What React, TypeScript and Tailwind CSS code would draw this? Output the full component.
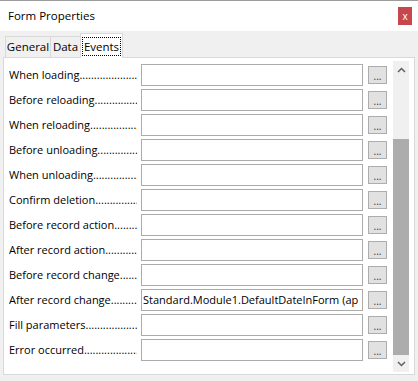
import React from "react"

const events = [
  { label: "When loading", value: "" },
  { label: "Before reloading", value: "" },
  { label: "When reloading", value: "" },
  { label: "Before unloading", value: "" },
  { label: "When unloading", value: "" },
  { label: "Confirm deletion", value: "" },
  { label: "Before record action", value: "" },
  { label: "After record action", value: "" },
  { label: "Before record change", value: "" },
  { label: "After record change", value: "Standard.Module1.DefaultDateInForm (ap" },
  { label: "Fill parameters", value: "" },
  { label: "Error occurred", value: "" },
]

const dots = ".".repeat(80)

function Chevron({ up }: { up?: boolean }) {
  return (
    <svg width="9" height="6" viewBox="0 0 9 6">
      <polyline
        points={up ? "1,5 4.5,1.5 8,5" : "1,1 4.5,4.5 8,1"}
        fill="none"
        stroke="#606060"
        strokeWidth="1.5"
      />
    </svg>
  )
}

export default function App() {
  return (
    <div className="w-[418px] h-[381px] bg-[#f0f0f0] border-t border-[#9c9c9c] flex flex-col font-['Open_Sans',sans-serif] text-[11px] text-black overflow-hidden">
      {/* Title bar */}
      <div className="h-[30px] bg-white flex items-center justify-between pl-2 pr-[6px]">
        <span className="text-[11.5px]">Form Properties</span>
        <div className="w-[14px] h-[18px] bg-[#c7474d] text-white flex items-center justify-center text-[10px] leading-none">
          x
        </div>
      </div>

      {/* Tabs */}
      <div className="h-[26px] flex items-end pl-[5px]">
        <div className="h-[21px] w-[46px] border border-b-0 border-[#d9d9d9] flex items-center justify-center text-[11.5px]">
          General
        </div>
        <div className="h-[21px] w-[31px] -ml-px border border-b-0 border-[#d9d9d9] flex items-center justify-center text-[11.5px]">
          Data
        </div>
        <div className="relative z-10 -mb-px -ml-px h-[25px] w-[43px] bg-white border border-b-0 border-[#d9d9d9] flex items-start justify-center pt-[3px] text-[11.5px]">
          <span className="border border-dotted border-black px-px leading-[17px]">Events</span>
        </div>
      </div>

      {/* Panel */}
      <div className="mx-[3px] h-[318px] bg-white border border-[#d9d9d9] flex">
        <div className="pl-[5px] pt-[6px] flex flex-col gap-[3px]">
          {events.map((e) => (
            <div key={e.label} className="flex items-center h-[22px]">
              <div className="w-[128px] mr-[4px] overflow-hidden whitespace-nowrap">
                {e.label}
                {dots}
              </div>
              <div className="w-[222px] h-[22px] border border-[#ababab] bg-white pl-[1px] overflow-hidden whitespace-nowrap flex items-center">
                {e.value}
              </div>
              <div className="ml-[5px] w-[19px] h-[18px] bg-[#e1e1e1] border border-[#adadad] flex items-end justify-center pb-[2px] text-[10px] leading-none text-[#333]">
                ...
              </div>
            </div>
          ))}
        </div>

        {/* Scrollbar */}
        <div className="ml-[6px] mt-[3px] w-[16px] h-[311px] bg-[#f0f0f0] flex flex-col">
          <div className="h-[17px] flex items-center justify-center">
            <Chevron up />
          </div>
          <div className="h-[61px]" />
          <div className="h-[216px] bg-[#acacac]" />
          <div className="h-[17px] flex items-center justify-center">
            <Chevron />
          </div>
        </div>
      </div>
    </div>
  )
}
